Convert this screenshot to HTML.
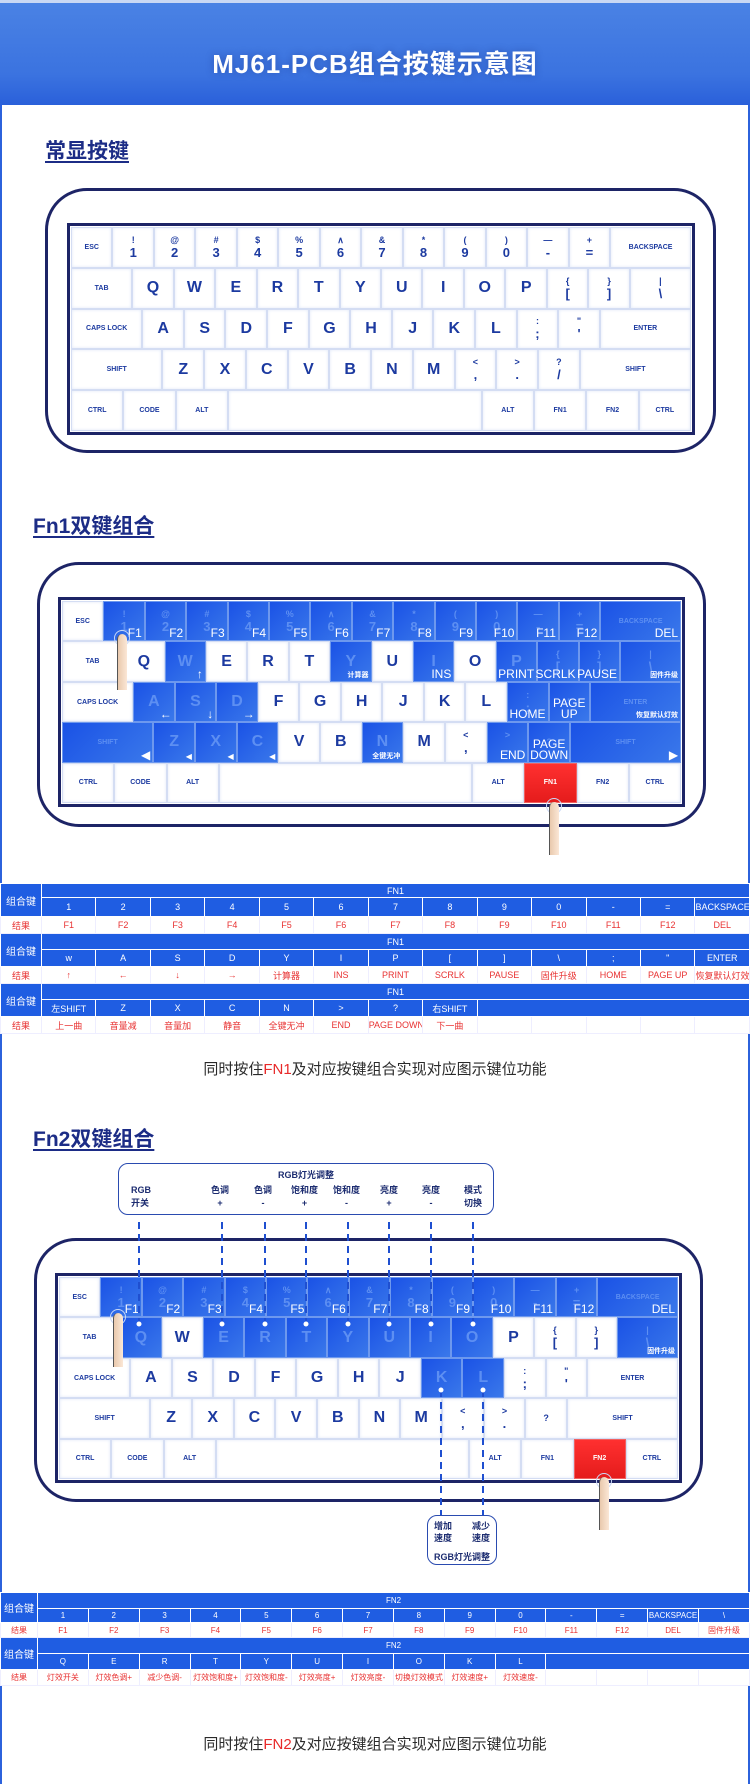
<!DOCTYPE html>
<html><head><meta charset="utf-8">
<style>
*{margin:0;padding:0;box-sizing:border-box}
body{width:750px;height:1784px;position:relative;background:#fff;overflow:hidden;font-family:"Liberation Sans","Noto Sans CJK SC",sans-serif}
.frame{position:absolute;left:0;top:0;width:750px;height:1784px;border-left:2px solid #2c62dc;border-right:2px solid #2c62dc}
.hdr{position:absolute;left:0;top:0;width:750px;height:105px;background:linear-gradient(#4a82e4,#3b73e0 70%,#2a60da);border-top:3px solid #c9d8f4}
.hdr div{position:absolute;left:0;right:0;top:41px;text-align:center;color:#fff;font:bold 26px "Liberation Sans","Noto Sans CJK SC",sans-serif;letter-spacing:1px;text-shadow:0 0 8px rgba(20,40,120,.4)}
.sec{position:absolute;color:#1c2c86;font:bold 21px "Liberation Sans","Noto Sans CJK SC",sans-serif;text-decoration:underline;text-underline-offset:3px;text-decoration-thickness:2px}
.case{position:absolute;border:3px solid #1d2466;border-radius:42px;background:#fff}
.kb{position:absolute;border:3px solid #1d2466;background:#fff;display:flex;flex-direction:column;padding:1px}
.row{flex:1;display:flex}
.k{flex:1;position:relative;border:1px solid #d4ddf3;box-shadow:inset 0 0 3px #e1e8f8;display:flex;flex-direction:column;align-items:center;justify-content:center;color:#1c3aa0;font:bold 16px "Liberation Sans",sans-serif;line-height:1;background:#fff}
.k.m{font-size:7px;font-weight:bold}
.k i{font-style:normal;font-size:9px;line-height:11px}
.k b{font-size:13px;line-height:14px}
.k.bl{background:linear-gradient(135deg,#1a52e6,#3a78ea);border-color:#6d98ee;color:#5d8ff2;box-shadow:none}
.k.rd{background:linear-gradient(#ff3030,#e51c1c);border-color:#f06060;color:#fff;box-shadow:none}
.k s{text-decoration:none;position:absolute;right:2px;bottom:1px;color:#fff;font:12px "Liberation Sans",sans-serif;line-height:1}
.k s.c{font:bold 7px "Liberation Sans","Noto Sans CJK SC",sans-serif}
.k s.t{font:12px "Liberation Sans",sans-serif;text-align:center;right:0;left:0;line-height:11px}
.fg{position:absolute;width:10px;background:linear-gradient(90deg,#e9c9ad,#fbe7d6);border-left:1px solid #555;border-radius:5px 5px 0 0}
.ring{position:absolute;width:16px;height:16px;border:1.5px solid #c9d8f6;border-radius:50%}
table{position:absolute;left:0;width:750px;border-collapse:collapse;table-layout:fixed;font:9px "Liberation Sans","Noto Sans CJK SC",sans-serif}
td{text-align:center;border:1px solid #fff;overflow:hidden;white-space:nowrap;padding:0}
tr.h td,tr.kk td,td.lab{background:#1f5de2;color:#fff}
tr.r td{color:#e83232;background:#fff;border-color:#eef}
td.lab{font-size:10px}
.note{position:absolute;left:0;width:750px;text-align:center;color:#2a2a2a;font:15px "Liberation Sans","Noto Sans CJK SC",sans-serif}
.note span{color:#e82a2a}
.cb{position:absolute;border:1.5px solid #2a4bb0;border-radius:10px;background:#fff;font:bold 9px "Liberation Sans","Noto Sans CJK SC",sans-serif;color:#1c2c70}
</style></head><body>
<div class="frame"></div>
<div class="hdr"><div>MJ61-PCB组合按键示意图</div></div>

<div class="sec" style="left:45px;top:135px">常显按键</div>
<div class="case" style="left:45px;top:188px;width:671px;height:265px"></div>
<div class="kb" style="left:67px;top:223px;width:628px;height:212px">
<div class="row"><div class="k m">ESC</div><div class="k"><i>!</i><b>1</b></div><div class="k"><i>@</i><b>2</b></div><div class="k"><i>#</i><b>3</b></div><div class="k"><i>$</i><b>4</b></div><div class="k"><i>%</i><b>5</b></div><div class="k"><i>∧</i><b>6</b></div><div class="k"><i>&amp;</i><b>7</b></div><div class="k"><i>*</i><b>8</b></div><div class="k"><i>(</i><b>9</b></div><div class="k"><i>)</i><b>0</b></div><div class="k"><i>—</i><b>-</b></div><div class="k"><i>+</i><b>=</b></div><div class="k m" style="flex:2">BACKSPACE</div></div>
<div class="row"><div class="k m" style="flex:1.5">TAB</div><div class="k">Q</div><div class="k">W</div><div class="k">E</div><div class="k">R</div><div class="k">T</div><div class="k">Y</div><div class="k">U</div><div class="k">I</div><div class="k">O</div><div class="k">P</div><div class="k"><i>{</i><b>[</b></div><div class="k"><i>}</i><b>]</b></div><div class="k" style="flex:1.5"><i>|</i><b>\</b></div></div>
<div class="row"><div class="k m" style="flex:1.75">CAPS LOCK</div><div class="k">A</div><div class="k">S</div><div class="k">D</div><div class="k">F</div><div class="k">G</div><div class="k">H</div><div class="k">J</div><div class="k">K</div><div class="k">L</div><div class="k"><i>:</i><b>;</b></div><div class="k"><i>"</i><b>'</b></div><div class="k m" style="flex:2.25">ENTER</div></div>
<div class="row"><div class="k m" style="flex:2.25">SHIFT</div><div class="k">Z</div><div class="k">X</div><div class="k">C</div><div class="k">V</div><div class="k">B</div><div class="k">N</div><div class="k">M</div><div class="k"><i>&lt;</i><b>,</b></div><div class="k"><i>&gt;</i><b>.</b></div><div class="k"><i>?</i><b>/</b></div><div class="k m" style="flex:2.75">SHIFT</div></div>
<div class="row"><div class="k m" style="flex:1.25">CTRL</div><div class="k m" style="flex:1.25">CODE</div><div class="k m" style="flex:1.25">ALT</div><div class="k" style="flex:6.25"></div><div class="k m" style="flex:1.25">ALT</div><div class="k m" style="flex:1.25">FN1</div><div class="k m" style="flex:1.25">FN2</div><div class="k m" style="flex:1.25">CTRL</div></div>
</div>

<div class="sec" style="left:33px;top:510px">Fn1双键组合</div>
<div class="case" style="left:37px;top:562px;width:669px;height:265px"></div>
<div class="kb" style="left:58px;top:597px;width:627px;height:210px">
<div class="row"><div class="k m">ESC</div><div class="k bl"><i>!</i><b>1</b><s>F1</s></div><div class="k bl"><i>@</i><b>2</b><s>F2</s></div><div class="k bl"><i>#</i><b>3</b><s>F3</s></div><div class="k bl"><i>$</i><b>4</b><s>F4</s></div><div class="k bl"><i>%</i><b>5</b><s>F5</s></div><div class="k bl"><i>∧</i><b>6</b><s>F6</s></div><div class="k bl"><i>&amp;</i><b>7</b><s>F7</s></div><div class="k bl"><i>*</i><b>8</b><s>F8</s></div><div class="k bl"><i>(</i><b>9</b><s>F9</s></div><div class="k bl"><i>)</i><b>0</b><s>F10</s></div><div class="k bl"><i>—</i><b>-</b><s>F11</s></div><div class="k bl"><i>+</i><b>=</b><s>F12</s></div><div class="k m bl" style="flex:2">BACKSPACE<s>DEL</s></div></div>
<div class="row"><div class="k m" style="flex:1.5">TAB</div><div class="k">Q</div><div class="k bl">W<s>↑</s></div><div class="k">E</div><div class="k">R</div><div class="k">T</div><div class="k bl">Y<s class="c">计算器</s></div><div class="k">U</div><div class="k bl">I<s>INS</s></div><div class="k">O</div><div class="k bl">P<s>PRINT</s></div><div class="k bl"><i>{</i><b>[</b><s>SCRLK</s></div><div class="k bl"><i>}</i><b>]</b><s>PAUSE</s></div><div class="k bl" style="flex:1.5"><i>|</i><b>\</b><s class="c">固件升级</s></div></div>
<div class="row"><div class="k m" style="flex:1.75">CAPS LOCK</div><div class="k bl">A<s>←</s></div><div class="k bl">S<s>↓</s></div><div class="k bl">D<s>→</s></div><div class="k">F</div><div class="k">G</div><div class="k">H</div><div class="k">J</div><div class="k">K</div><div class="k">L</div><div class="k bl"><i>:</i><b>;</b><s>HOME</s></div><div class="k bl"><i>"</i><s class="t">PAGE<br>UP</s></div><div class="k m bl" style="flex:2.25">ENTER<s class="c">恢复默认灯效</s></div></div>
<div class="row"><div class="k m bl" style="flex:2.25">SHIFT<s>◀</s></div><div class="k bl">Z<s style="font-size:8px">◀</s></div><div class="k bl">X<s style="font-size:8px">◀</s></div><div class="k bl">C<s style="font-size:8px">◀</s></div><div class="k">V</div><div class="k">B</div><div class="k bl">N<s class="c">全键无冲</s></div><div class="k">M</div><div class="k"><i>&lt;</i><b>,</b></div><div class="k bl"><i>&gt;</i><b>.</b><s>END</s></div><div class="k bl"><i>?</i><s class="t">PAGE<br>DOWN</s></div><div class="k m bl" style="flex:2.75">SHIFT<s>▶</s></div></div>
<div class="row"><div class="k m" style="flex:1.25">CTRL</div><div class="k m" style="flex:1.25">CODE</div><div class="k m" style="flex:1.25">ALT</div><div class="k" style="flex:6.25"></div><div class="k m" style="flex:1.25">ALT</div><div class="k m rd" style="flex:1.25">FN1</div><div class="k m" style="flex:1.25">FN2</div><div class="k m" style="flex:1.25">CTRL</div></div>
</div>
<div class="ring" style="left:114px;top:630px"></div><div class="fg" style="left:117px;top:634px;height:56px"></div>
<div class="ring" style="left:546px;top:798px"></div><div class="fg" style="left:549px;top:802px;height:53px"></div>

<table style="top:883px">
<colgroup><col style="width:41px"><col span="13"></colgroup>
<tr class="h" style="height:14px"><td class="lab" rowspan="2">组合键</td><td colspan="13">FN1</td></tr>
<tr class="kk" style="height:19px"><td>1</td><td>2</td><td>3</td><td>4</td><td>5</td><td>6</td><td>7</td><td>8</td><td>9</td><td>0</td><td>-</td><td>=</td><td>BACKSPACE</td></tr>
<tr class="r" style="height:17px"><td>结果</td><td>F1</td><td>F2</td><td>F3</td><td>F4</td><td>F5</td><td>F6</td><td>F7</td><td>F8</td><td>F9</td><td>F10</td><td>F11</td><td>F12</td><td>DEL</td></tr>
<tr class="h" style="height:16px"><td class="lab" rowspan="2">组合键</td><td colspan="13">FN1</td></tr>
<tr class="kk" style="height:17px"><td>w</td><td>A</td><td>S</td><td>D</td><td>Y</td><td>I</td><td>P</td><td>[</td><td>]</td><td>\</td><td>;</td><td>"</td><td>ENTER</td></tr>
<tr class="r" style="height:17px"><td>结果</td><td>↑</td><td>←</td><td>↓</td><td>→</td><td>计算器</td><td>INS</td><td>PRINT</td><td>SCRLK</td><td>PAUSE</td><td>固件升级</td><td>HOME</td><td>PAGE UP</td><td>恢复默认灯效</td></tr>
<tr class="h" style="height:16px"><td class="lab" rowspan="2">组合键</td><td colspan="13">FN1</td></tr>
<tr class="kk" style="height:17px"><td>左SHIFT</td><td>Z</td><td>X</td><td>C</td><td>N</td><td>&gt;</td><td>?</td><td>右SHIFT</td><td colspan="5"></td></tr>
<tr class="r" style="height:17px"><td>结果</td><td>上一曲</td><td>音量减</td><td>音量加</td><td>静音</td><td>全键无冲</td><td>END</td><td>PAGE DOWN</td><td>下一曲</td><td></td><td></td><td></td><td></td><td></td></tr>
</table>
<div class="note" style="top:1058px">同时按住<span>FN1</span>及对应按键组合实现对应图示键位功能</div>

<div class="sec" style="left:33px;top:1123px">Fn2双键组合</div>
<div class="cb" style="left:118px;top:1163px;width:376px;height:52px">
<div style="position:absolute;left:0;right:0;top:4px;text-align:center">RGB灯光调整</div>
<div style="position:absolute;left:12px;top:20px;line-height:13px">RGB<br>开关</div>
<div style="position:absolute;left:92px;top:20px;line-height:13px;text-align:center">色调<br>+</div>
<div style="position:absolute;left:135px;top:20px;line-height:13px;text-align:center">色调<br>-</div>
<div style="position:absolute;left:172px;top:20px;line-height:13px;text-align:center">饱和度<br>+</div>
<div style="position:absolute;left:214px;top:20px;line-height:13px;text-align:center">饱和度<br>-</div>
<div style="position:absolute;left:261px;top:20px;line-height:13px;text-align:center">亮度<br>+</div>
<div style="position:absolute;left:303px;top:20px;line-height:13px;text-align:center">亮度<br>-</div>
<div style="position:absolute;left:345px;top:20px;line-height:13px;text-align:center">模式<br>切换</div>
</div>
<div class="case" style="left:34px;top:1238px;width:669px;height:264px"></div>
<div class="kb" style="left:55px;top:1273px;width:627px;height:210px">
<div class="row"><div class="k m">ESC</div><div class="k bl"><i>!</i><b>1</b><s>F1</s></div><div class="k bl"><i>@</i><b>2</b><s>F2</s></div><div class="k bl"><i>#</i><b>3</b><s>F3</s></div><div class="k bl"><i>$</i><b>4</b><s>F4</s></div><div class="k bl"><i>%</i><b>5</b><s>F5</s></div><div class="k bl"><i>∧</i><b>6</b><s>F6</s></div><div class="k bl"><i>&amp;</i><b>7</b><s>F7</s></div><div class="k bl"><i>*</i><b>8</b><s>F8</s></div><div class="k bl"><i>(</i><b>9</b><s>F9</s></div><div class="k bl"><i>)</i><b>0</b><s>F10</s></div><div class="k bl"><i>—</i><b>-</b><s>F11</s></div><div class="k bl"><i>+</i><b>=</b><s>F12</s></div><div class="k m bl" style="flex:2">BACKSPACE<s>DEL</s></div></div>
<div class="row"><div class="k m" style="flex:1.5">TAB</div><div class="k bl">Q</div><div class="k">W</div><div class="k bl">E</div><div class="k bl">R</div><div class="k bl">T</div><div class="k bl">Y</div><div class="k bl">U</div><div class="k bl">I</div><div class="k bl">O</div><div class="k">P</div><div class="k"><i>{</i><b>[</b></div><div class="k"><i>}</i><b>]</b></div><div class="k bl" style="flex:1.5"><i>|</i><b>\</b><s class="c">固件升级</s></div></div>
<div class="row"><div class="k m" style="flex:1.75">CAPS LOCK</div><div class="k">A</div><div class="k">S</div><div class="k">D</div><div class="k">F</div><div class="k">G</div><div class="k">H</div><div class="k">J</div><div class="k bl">K</div><div class="k bl">L</div><div class="k"><i>:</i><b>;</b></div><div class="k"><i>"</i><b>'</b></div><div class="k m" style="flex:2.25">ENTER</div></div>
<div class="row"><div class="k m" style="flex:2.25">SHIFT</div><div class="k">Z</div><div class="k">X</div><div class="k">C</div><div class="k">V</div><div class="k">B</div><div class="k">N</div><div class="k">M</div><div class="k"><i>&lt;</i><b>,</b></div><div class="k"><i>&gt;</i><b>.</b></div><div class="k"><i>?</i></div><div class="k m" style="flex:2.75">SHIFT</div></div>
<div class="row"><div class="k m" style="flex:1.25">CTRL</div><div class="k m" style="flex:1.25">CODE</div><div class="k m" style="flex:1.25">ALT</div><div class="k" style="flex:6.25"></div><div class="k m" style="flex:1.25">ALT</div><div class="k m" style="flex:1.25">FN1</div><div class="k m rd" style="flex:1.25">FN2</div><div class="k m" style="flex:1.25">CTRL</div></div>
</div>
<svg style="position:absolute;left:0;top:0" width="750" height="1784">
<g stroke="#1f4fd0" stroke-width="2" stroke-dasharray="7,5" fill="none">
<path d="M139 1222V1324M222 1222V1324M265 1222V1324M306 1222V1324M348 1222V1324M389 1222V1324M431 1222V1324M473 1222V1324"/>
<path d="M441 1390V1515M483 1390V1515"/>
</g>
<g fill="#fff"><circle cx="139" cy="1324" r="2.5"/><circle cx="222" cy="1324" r="2.5"/><circle cx="265" cy="1324" r="2.5"/><circle cx="306" cy="1324" r="2.5"/><circle cx="348" cy="1324" r="2.5"/><circle cx="389" cy="1324" r="2.5"/><circle cx="431" cy="1324" r="2.5"/><circle cx="473" cy="1324" r="2.5"/><circle cx="441" cy="1390" r="2.5"/><circle cx="483" cy="1390" r="2.5"/></g>
</svg>
<div class="ring" style="left:110px;top:1309px"></div><div class="fg" style="left:113px;top:1313px;height:54px"></div>
<div class="ring" style="left:596px;top:1473px"></div><div class="fg" style="left:599px;top:1477px;height:53px"></div>
<div class="cb" style="left:427px;top:1515px;width:70px;height:50px">
<div style="position:absolute;left:6px;top:4px;line-height:12px">增加<br>速度</div>
<div style="position:absolute;right:6px;top:4px;line-height:12px">减少<br>速度</div>
<div style="position:absolute;left:0;right:0;top:34px;text-align:center">RGB灯光调整</div>
</div>

<table style="top:1592px;font-size:8px">
<colgroup><col style="width:37px"><col span="14"></colgroup>
<tr class="h" style="height:16px"><td class="lab" rowspan="2">组合键</td><td colspan="14">FN2</td></tr>
<tr class="kk" style="height:14px"><td>1</td><td>2</td><td>3</td><td>4</td><td>5</td><td>6</td><td>7</td><td>8</td><td>9</td><td>0</td><td>-</td><td>=</td><td>BACKSPACE</td><td>\</td></tr>
<tr class="r" style="height:15px"><td>结果</td><td>F1</td><td>F2</td><td>F3</td><td>F4</td><td>F5</td><td>F6</td><td>F7</td><td>F8</td><td>F9</td><td>F10</td><td>F11</td><td>F12</td><td>DEL</td><td>固件升级</td></tr>
<tr class="h" style="height:16px"><td class="lab" rowspan="2">组合键</td><td colspan="14">FN2</td></tr>
<tr class="kk" style="height:16px"><td>Q</td><td>E</td><td>R</td><td>T</td><td>Y</td><td>U</td><td>I</td><td>O</td><td>K</td><td>L</td><td colspan="4"></td></tr>
<tr class="r" style="height:16px"><td>结果</td><td>灯效开关</td><td>灯效色调+</td><td>减少色调-</td><td>灯效饱和度+</td><td>灯效饱和度-</td><td>灯效亮度+</td><td>灯效亮度-</td><td>切换灯效模式</td><td>灯效速度+</td><td>灯效速度-</td><td></td><td></td><td></td><td></td></tr>
</table>
<div class="note" style="top:1733px">同时按住<span>FN2</span>及对应按键组合实现对应图示键位功能</div>
</body></html>
